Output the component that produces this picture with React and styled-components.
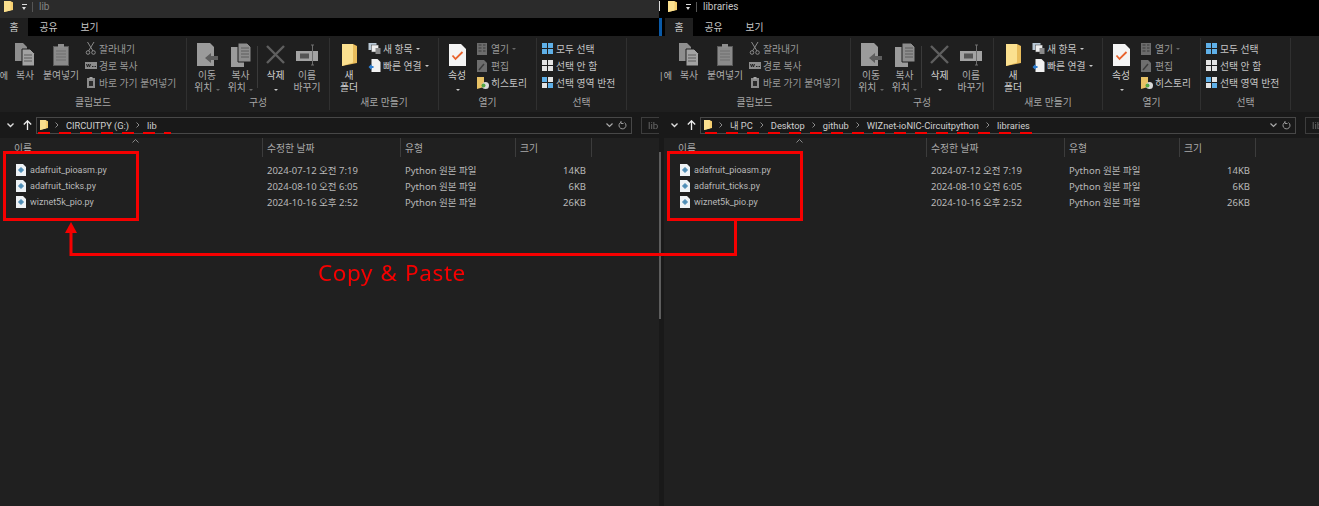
import React from 'react'
import styled, { createGlobalStyle } from 'styled-components'

const GlobalStyle = createGlobalStyle`
  html, body { margin: 0; padding: 0; background: #202020; }
  body { font-family: "Noto Sans", "Noto Sans CJK KR", sans-serif; }
`

const RED = '#f60000'
const LATIN = '"Roboto", "Noto Sans CJK KR", sans-serif'

const Screen = styled.div`
  position: relative;
  display: flex;
  width: 1319px;
  height: 506px;
  overflow: hidden;
  background: #202020;
`

const Window = styled.div`
  display: flex;
  flex-direction: column;
  flex: none;
  width: ${p => p.$width}px;
  height: 100%;
  overflow: hidden;
  filter: blur(0.3px);
`

const TitleBar = styled.div`
  position: relative;
  display: flex;
  align-items: center;
  flex: none;
  height: 18px;
  padding: 0 0 5px ${p => p.$gutter + 4}px;
  box-sizing: border-box;
  background: ${p => (p.$active ? '#000' : '#2b2b2b')};
  ${p => p.$active && `
    &::before {
      content: '';
      position: absolute;
      left: 0;
      top: 1px;
      width: 1px;
      height: 10px;
      background: #ddd;
    }
  `}
`

const QuickCaret = styled.span`
  position: relative;
  width: 5px;
  height: 5px;
  margin-left: 9px;
  border-top: 1px solid #ddd;
  &::after {
    content: '';
    position: absolute;
    left: 0;
    top: 2px;
    border: 2.5px solid transparent;
    border-top: 3px solid #ddd;
    border-bottom: 0;
  }
`

const TitleRule = styled.span`
  width: 1px;
  height: 10px;
  margin: 0 6px 0 5px;
  background: #555;
`

const TitleText = styled.span`
  font-family: ${LATIN};
  font-size: 10px;
  color: ${p => (p.$active ? '#c4c4c4' : '#858585')};
`

const TabRow = styled.div`
  display: flex;
  flex: none;
  height: 18px;
  background: #000;
  padding-left: ${p => p.$gutter}px;
  ${p => p.$active && 'border-left: 3px solid #0a5aa8; padding-left: 3px;'}
`

const Tab = styled.div`
  display: flex;
  align-items: center;
  justify-content: center;
  width: ${p => p.$width}px;
  font-size: 9.8px;
  color: #c8c8c8;
  background: ${p => (p.$on ? '#1f1f1f' : 'transparent')};
`

const Ribbon = styled.div`
  display: flex;
  flex: none;
  height: 76px;
  background: #1f1f1f;
`

const Group = styled.div`
  display: flex;
  flex-direction: column;
  flex: none;
  width: ${p => p.$width}px;
  margin: 2px 0;
  box-sizing: border-box;
  border-right: 1px solid #303030;
`

const GroupBody = styled.div`
  display: flex;
  flex: none;
  height: 58px;
  padding-left: ${p => p.$pad || 0}px;
`

const GroupLabel = styled.div`
  flex: none;
  height: 14px;
  line-height: 14px;
  text-align: center;
  font-size: 9.8px;
  color: #a6a6a6;
`

const Cut = styled.div`
  flex: none;
  width: ${p => p.$width}px;
  display: flex;
  justify-content: flex-end;
  padding-top: 32px;
  height: 12px;
  line-height: 12px;
  font-size: 9px;
  color: #bcbcbc;
  white-space: nowrap;
`

const Big = styled.div`
  display: flex;
  flex-direction: column;
  align-items: center;
  flex: none;
  width: ${p => p.$width}px;
  font-size: 9.8px;
  line-height: 12px;
  color: ${p => (p.$strong ? '#d0d0d0' : '#aeaeae')};
  text-align: center;
  white-space: nowrap;
`

const BigIcon = styled.div`
  display: flex;
  align-items: center;
  justify-content: center;
  height: 25px;
  margin-bottom: 3px;
  padding-top: 4px;
`

const Small = styled.div`
  display: flex;
  flex-direction: column;
  margin-left: ${p => p.$left || 0}px;
  padding-top: 2px;
`

const SmallItem = styled.div`
  display: flex;
  align-items: center;
  gap: 2px;
  height: 17px;
  font-size: 9.8px;
  color: ${p => (p.$dim ? '#9a9a9a' : '#c4c4c4')};
  white-space: nowrap;
`

const Drop = styled.span`
  display: inline-block;
  margin-left: 1px;
  border: 2px solid transparent;
  border-top: 2.5px solid ${p => (p.$dim ? '#666' : '#c8c8c8')};
  border-bottom: 0;
`

const Divider = styled.div`
  flex: none;
  width: 1px;
  height: 42px;
  margin-top: 8px;
  background: #3a3a3a;
`

const AddressRow = styled.div`
  display: flex;
  align-items: center;
  flex: none;
  height: 26px;
  padding-left: ${p => p.$gutter + 7}px;
  background: #191919;
`

const Nav = styled.div`
  display: flex;
  flex: none;
  align-items: center;
  gap: 9px;
  width: 29px;
`

const AddressBox = styled.div`
  display: flex;
  flex: none;
  align-items: center;
  width: 596px;
  height: 17px;
  box-sizing: border-box;
  padding: 0 4px 0 3px;
  border: 1px solid #474747;
  background: #191919;
`

const Crumbs = styled.div`
  display: flex;
  align-items: center;
  flex: 1;
  gap: 7px;
  font-family: ${LATIN};
  font-size: 9.3px;
  color: #cfcfcf;
  white-space: nowrap;
`

const SearchBox = styled.div`
  flex: none;
  width: 40px;
  height: 17px;
  margin-left: 9px;
  box-sizing: border-box;
  padding-left: 6px;
  border: 1px solid #3d3d3d;
  font-family: ${LATIN};
  font-size: 9.8px;
  line-height: 15px;
  color: #6a6a6a;
`

const Body = styled.div`
  display: flex;
  flex: 1;
`

const Gutter = styled.div`
  flex: none;
  width: ${p => p.$width}px;
  background: #191919;
  padding-top: 14px;
  box-sizing: border-box;
`

const ScrollThumb = styled.div`
  width: 2px;
  height: 167px;
  background: #5d5d5d;
`

const List = styled.div`
  position: relative;
  flex: 1;
  background: #202020;
`

const Columns = styled.div`
  display: grid;
  grid-template-columns: 262px 138px 115px 77px;
`

const HeadCell = styled.div`
  height: 19px;
  line-height: 21px;
  box-sizing: border-box;
  padding-left: ${p => p.$pad}px;
  font-size: 9.8px;
  color: #aaa;
  border-right: ${p => (p.$last ? '1px solid #3c3c3c' : 'none')};
  border-left: ${p => (p.$first ? 'none' : '1px solid #3c3c3c')};
`

const SortCaret = styled.svg`
  position: absolute;
  left: 132px;
  top: 1px;
`

const Rows = styled.div`
  padding-top: 5px;
`

const Cell = styled.div`
  display: flex;
  align-items: center;
  gap: 4px;
  height: 16px;
  box-sizing: border-box;
  padding: ${p => p.$pad};
  justify-content: ${p => (p.$right ? 'flex-end' : 'flex-start')};
  color: #b9b9b9;
  font-size: 9.5px;
  white-space: nowrap;
`

const FileName = styled.span`
  font-family: ${LATIN};
  font-size: 9px;
`

const Box = styled.div`
  position: absolute;
  left: ${p => p.$x}px;
  top: 151px;
  width: 136px;
  height: 70px;
  box-sizing: border-box;
  border: 3px solid ${RED};
`

const Dashes = styled.div`
  position: absolute;
  left: ${p => p.$x}px;
  top: 132px;
  width: ${p => p.$width}px;
  height: 2px;
  background: repeating-linear-gradient(90deg, ${RED} 0 12px, transparent 12px 21px);
`

const ArrowLayer = styled.svg`
  position: absolute;
  left: 0;
  top: 0;
`

const Caption = styled.div`
  position: absolute;
  left: 318px;
  top: 257px;
  font-family: "Noto Sans", sans-serif;
  font-size: 22.5px;
  line-height: 32px;
  letter-spacing: 0.6px;
  word-spacing: 1px;
  color: ${RED};
`

const FolderIcon = ({ w = 9, h = 11 }) => (
  <svg width={w} height={h} viewBox="0 0 9 11">
    <path d="M0 0h6l3 1.2V9L0 11z" fill="#f6cf6f" />
    <path d="M0 0h6.5v9.4L0 11z" fill="#fbe08f" />
  </svg>
)

const BigFolder = () => (
  <svg width="15" height="22" viewBox="0 0 15 22">
    <path d="M0 0h11l4 2v17l-15 3z" fill="#e9bd5c" />
    <path d="M0 0h11v18.6L0 22z" fill="#fbe08f" />
  </svg>
)

const CopyIcon = () => (
  <svg width="20" height="24" viewBox="0 0 20 24">
    <path d="M0 0h8l4 4v14H0z" fill="#8e8e8e" />
    <path d="M7 6h8l4.500 4.500V23H7z" fill="#a2a2a2" stroke="#1f1f1f" />
    <path d="M9 12h8M9 15h8M9 18h8" stroke="#5c5c5c" />
  </svg>
)

const PasteIcon = () => (
  <svg width="16" height="22" viewBox="0 0 16 22">
    <rect x="0.500" y="2.500" width="15" height="19" fill="#8a8a8a" stroke="#5a5a5a" />
    <rect x="5" y="0" width="6" height="4" fill="#8e8e8e" />
    <path d="M3 7h10M3 10h10M3 13h10M3 16h10" stroke="#6e6e6e" />
  </svg>
)

const ScissorIcon = () => (
  <svg width="12" height="13" viewBox="0 0 12 13" fill="none" stroke="#8b8b8b">
    <path d="M2.500 0l5.500 9M9 0L3.500 9" />
    <circle cx="3" cy="10.500" r="1.800" />
    <circle cx="8.500" cy="10.500" r="1.800" />
  </svg>
)

const PathIcon = () => (
  <svg width="12" height="7" viewBox="0 0 12 7">
    <rect width="12" height="7" fill="#8c8c8c" />
    <path d="M1.500 2l1 3 1-3 1 3 1-3M7 4.500h1.500M9.500 4.500H11" stroke="#222" fill="none" />
  </svg>
)

const ShortcutIcon = () => (
  <svg width="12" height="11" viewBox="0 0 12 11">
    <rect x="2" y="1" width="8" height="10" fill="#8c8c8c" />
    <rect x="4.500" y="0" width="3" height="2" fill="#a5a5a5" />
    <rect x="4" y="4" width="4" height="5" fill="#2c2c2c" />
  </svg>
)

const MoveIcon = () => (
  <svg width="21" height="23" viewBox="0 0 21 23">
    <path d="M0 0h13l4 4v19H0z" fill="#9b9b9b" />
    <path d="M14 10l-6 5 6 5v-3h7v-4h-7z" fill="#5e5e5e" />
  </svg>
)

const CopyToIcon = () => (
  <svg width="20" height="24" viewBox="0 0 20 24">
    <path d="M0 4h8l5 5v15H0z" fill="#9b9b9b" />
    <path d="M7 0h9l4 4v15H7z" fill="#8d8d8d" stroke="#1f1f1f" />
    <path d="M10 5h8M10 8h8M10 11h8M10 14h8" stroke="#5c5c5c" />
  </svg>
)

const DeleteIcon = () => (
  <svg width="19" height="19" viewBox="0 0 19 19">
    <path d="M1 1l17 17M18 1L1 18" stroke="#5f5f5f" strokeWidth="2.400" />
  </svg>
)

const RenameIcon = () => (
  <svg width="23" height="22" viewBox="0 0 23 22" fill="none">
    <rect x="0" y="7" width="22" height="10" fill="#a3a3a3" />
    <rect x="4" y="9.500" width="9" height="5" fill="#555" />
    <path d="M15 1h3M16.500 1v20M15 21h3" stroke="#6e6e6e" />
  </svg>
)

const NewItemIcon = () => (
  <svg width="13" height="11" viewBox="0 0 12 11">
    <rect x="0" y="0" width="8" height="7" fill="#b9c9d6" />
    <rect x="3" y="2" width="7" height="7" fill="#eee" stroke="#444" strokeWidth="0.500" />
    <rect x="7" y="5" width="5" height="6" fill="#8a8a8a" />
  </svg>
)

const QuickIcon = () => (
  <svg width="13" height="13" viewBox="0 0 12 13">
    <path d="M3 0h6l3 3v10H3z" fill="#f1f1f1" />
    <path d="M0 8l3-3v2h2v2H3v2z" fill="#2d7fd3" />
  </svg>
)

const PropertyIcon = () => (
  <svg width="17" height="22" viewBox="0 0 17 22">
    <path d="M0 0h12l5 5v17H0z" fill="#f4f4f4" />
    <path d="M3.500 11.500l3 3.500 7-7" stroke="#e8622c" strokeWidth="1.800" fill="none" />
  </svg>
)

const OpenIcon = () => (
  <svg width="12" height="12" viewBox="0 0 12 12">
    <rect width="10" height="12" fill="#6c6c6c" />
    <path d="M1.500 2h3M1.500 5h3M1.500 8h3M6 2h2.500M6 5h2.500M6 8h2.500" stroke="#3b3b3b" />
  </svg>
)

const EditIcon = () => (
  <svg width="12" height="12" viewBox="0 0 12 12">
    <path d="M0 0h7l3 3v9H0z" fill="#6e6e6e" />
    <path d="M2 10l5-6" stroke="#3b3b3b" strokeWidth="1.400" />
  </svg>
)

const HistoryIcon = () => (
  <svg width="12" height="12" viewBox="0 0 12 12">
    <path d="M0 0h7v10L0 12z" fill="#e8c265" />
    <circle cx="8.500" cy="8.500" r="3.500" fill="#d9d9d9" />
    <circle cx="6.500" cy="8.500" r="2" fill="#53a544" />
  </svg>
)

const SelectIcon = ({ colors }) => (
  <svg width="12" height="11" viewBox="0 0 12 11">
    <rect width="5" height="5" fill={colors[0]} />
    <rect x="6" width="5" height="5" fill={colors[1]} />
    <rect y="6" width="5" height="5" fill={colors[2]} />
    <rect x="6" y="6" width="5" height="5" fill={colors[3]} />
  </svg>
)

const PyIcon = () => (
  <svg width="10" height="12" viewBox="0 0 10 12">
    <path d="M0 0h7l3 3v9H0z" fill="#eef2f5" />
    <path d="M5 3.500l2.500 2.500L5 8.500 2.500 6z" fill="#4d8cb5" stroke="#4d8cb5" />
  </svg>
)

const Chevron = () => (
  <svg width="4" height="6" viewBox="0 0 4 6" fill="none" stroke="#8a8a8a">
    <path d="M0.500 0.500L3 3 0.500 5.500" />
  </svg>
)

const files = [
  ['adafruit_pioasm.py', '2024-07-12 오전 7:19', '14KB'],
  ['adafruit_ticks.py', '2024-08-10 오전 6:05', '6KB'],
  ['wiznet5k_pio.py', '2024-10-16 오후 2:52', '26KB'],
]

const BLUE = '#5fb0e8'
const WHITE = '#e4e4e4'

function RibbonBar({ gutter }) {
  return (
    <Ribbon>
      <Group $width={187 + gutter}>
        <GroupBody>
          <Cut $width={8 + gutter}>{gutter ? '|에' : '에'}</Cut>
          <Big $width={34}><BigIcon><CopyIcon /></BigIcon>복사</Big>
          <Big $width={38}><BigIcon><PasteIcon /></BigIcon>붙여넣기</Big>
          <Small $left={5}>
            <SmallItem $dim><ScissorIcon />잘라내기</SmallItem>
            <SmallItem $dim><PathIcon />경로 복사</SmallItem>
            <SmallItem $dim><ShortcutIcon />바로 가기 붙여넣기</SmallItem>
          </Small>
        </GroupBody>
        <GroupLabel>클립보드</GroupLabel>
      </Group>
      <Group $width={143}>
        <GroupBody $pad={3}>
          <Big $width={34}><BigIcon><MoveIcon /></BigIcon>이동<span>위치 <Drop $dim /></span></Big>
          <Big $width={33}><BigIcon><CopyToIcon /></BigIcon>복사<span>위치 <Drop $dim /></span></Big>
          <Divider />
          <Big $width={35} $strong><BigIcon><DeleteIcon /></BigIcon>삭제<span><Drop /></span></Big>
          <Big $width={28}><BigIcon><RenameIcon /></BigIcon>이름<span>바꾸기</span></Big>
        </GroupBody>
        <GroupLabel>구성</GroupLabel>
      </Group>
      <Group $width={109}>
        <GroupBody $pad={5}>
          <Big $width={28} $strong><BigIcon><BigFolder /></BigIcon>새<span>폴더</span></Big>
          <Small $left={5}>
            <SmallItem><NewItemIcon />새 항목 <Drop /></SmallItem>
            <SmallItem><QuickIcon />빠른 연결 <Drop /></SmallItem>
          </Small>
        </GroupBody>
        <GroupLabel>새로 만들기</GroupLabel>
      </Group>
      <Group $width={98}>
        <GroupBody $pad={4}>
          <Big $width={28} $strong><BigIcon><PropertyIcon /></BigIcon>속성<span><Drop /></span></Big>
          <Small $left={6}>
            <SmallItem $dim><OpenIcon />열기 <Drop $dim /></SmallItem>
            <SmallItem $dim><EditIcon />편집</SmallItem>
            <SmallItem><HistoryIcon />히스토리</SmallItem>
          </Small>
        </GroupBody>
        <GroupLabel>열기</GroupLabel>
      </Group>
      <Group $width={90}>
        <GroupBody $pad={5}>
          <Small>
            <SmallItem><SelectIcon colors={[BLUE, BLUE, BLUE, BLUE]} />모두 선택</SmallItem>
            <SmallItem><SelectIcon colors={[WHITE, WHITE, WHITE, WHITE]} />선택 안 함</SmallItem>
            <SmallItem><SelectIcon colors={[BLUE, WHITE, WHITE, BLUE]} />선택 영역 반전</SmallItem>
          </Small>
        </GroupBody>
        <GroupLabel>선택</GroupLabel>
      </Group>
    </Ribbon>
  )
}

function Explorer({ title, crumbs, search, width, gutter, active }) {
  return (
    <Window $width={width}>
      <TitleBar $gutter={gutter} $active={active}>
        <FolderIcon />
        <QuickCaret />
        <TitleRule />
        <TitleText $active={active}>{title}</TitleText>
      </TitleBar>
      <TabRow $gutter={gutter} $active={active}>
        <Tab $width={28} $on>홈</Tab>
        <Tab $width={41}>공유</Tab>
        <Tab $width={41}>보기</Tab>
      </TabRow>
      <RibbonBar gutter={gutter} />
      <AddressRow $gutter={gutter}>
        <Nav>
          <svg width="7" height="5" viewBox="0 0 7 5" fill="none" stroke="#ddd" strokeWidth="1.400">
            <path d="M0.500 0.500L3.500 3.500 6.500 0.500" />
          </svg>
          <svg width="9" height="10" viewBox="0 0 9 10" fill="none" stroke="#eee" strokeWidth="1.300">
            <path d="M4.500 10V1M0.800 4.500L4.500 0.800 8.200 4.500" />
          </svg>
        </Nav>
        <AddressBox>
          <Crumbs>
            <FolderIcon w={8} h={10} />
            {crumbs.map(c => (
              <React.Fragment key={c}>
                <Chevron />
                <span>{c}</span>
              </React.Fragment>
            ))}
          </Crumbs>
          <svg width="7" height="5" viewBox="0 0 7 5" fill="none" stroke="#aaa" strokeWidth="1.200">
            <path d="M0.500 0.500L3.500 3.500 6.500 0.500" />
          </svg>
          <svg width="9" height="9" viewBox="0 0 9 9" fill="none" stroke="#999" style={{ marginLeft: 5 }}>
            <path d="M6.500 1.500A3.500 3.500 0 1 1 3 1.200M3 0v2.500h2.500" />
          </svg>
        </AddressBox>
        <SearchBox>{search}</SearchBox>
      </AddressRow>
      <Body>
        {gutter > 0 && <Gutter $width={gutter}><ScrollThumb /></Gutter>}
        <List>
          <SortCaret width="7" height="4" viewBox="0 0 7 4" fill="none" stroke="#888">
            <path d="M0.500 3.500L3.500 0.500 6.500 3.500" />
          </SortCaret>
          <Columns>
            <HeadCell $first $pad={14}>이름</HeadCell>
            <HeadCell $pad={4}>수정한 날짜</HeadCell>
            <HeadCell $pad={4}>유형</HeadCell>
            <HeadCell $pad={4} $last>크기</HeadCell>
          </Columns>
          <Rows>
            {files.map(([name, date, size]) => (
              <Columns key={name}>
                <Cell $pad="0 0 0 16px"><PyIcon /><FileName>{name}</FileName></Cell>
                <Cell $pad="0 0 0 5px">{date}</Cell>
                <Cell $pad="0 0 0 5px">Python 원본 파일</Cell>
                <Cell $pad="0 6px 0 0" $right>{size}</Cell>
              </Columns>
            ))}
          </Rows>
        </List>
      </Body>
    </Window>
  )
}

export default function App() {
  return (
    <>
      <GlobalStyle />
      <Screen>
        <Explorer title="lib" crumbs={['CIRCUITPY (G:)', 'lib']} search="lib" width={659} gutter={0} />
        <Explorer
          title="libraries"
          crumbs={['내 PC', 'Desktop', 'github', 'WIZnet-ioNIC-Circuitpython', 'libraries']}
          search="lib"
          width={660}
          gutter={5}
          active
        />
        <Dashes $x={38} $width={133} />
        <Dashes $x={705} $width={327} />
        <Box $x={3} />
        <Box $x={667} />
        <ArrowLayer width="1319" height="506" viewBox="0 0 1319 506" fill="none">
          <path d="M735.500 221V254.500H71V232" stroke={RED} strokeWidth="3" />
          <path d="M71 222l6 11H65z" fill={RED} />
        </ArrowLayer>
        <Caption>Copy &amp; Paste</Caption>
      </Screen>
    </>
  )
}
